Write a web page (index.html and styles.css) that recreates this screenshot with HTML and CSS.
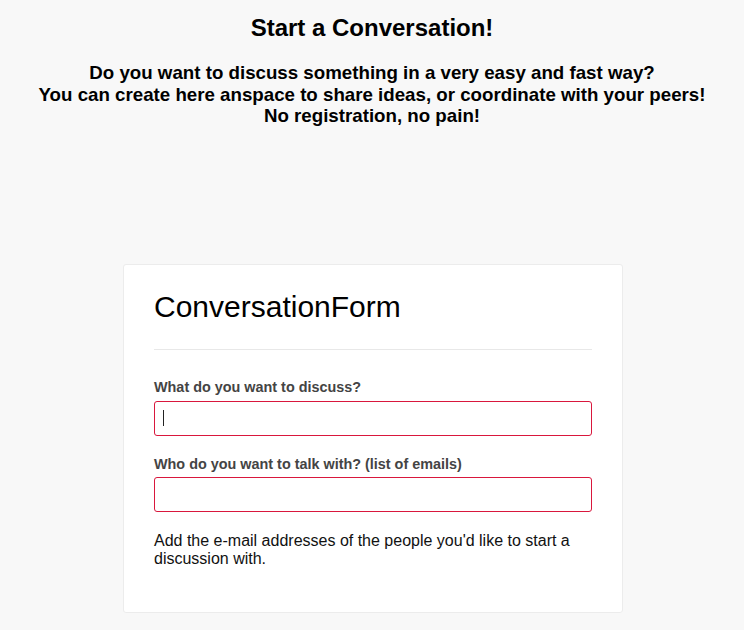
FILE: index.html
```html
<!DOCTYPE html>
<html>
<head>
<meta charset="utf-8">
<link rel="stylesheet" href="styles.css">
</head>
<body>
<header class="intro">
  <h1 class="intro-title">Start a Conversation!</h1>
  <p class="intro-text">Do you want to discuss something in a very easy and fast way?<br>You can create here anspace to share ideas, or coordinate with your peers!<br>No registration, no pain!</p>
</header>
<main class="card">
  <h2 class="card-title">ConversationForm</h2>
  <hr class="card-sep">
  <form class="form">
    <div class="field">
      <label class="field-label">What do you want to discuss?</label>
      <div class="field-input"><span class="caret"></span></div>
    </div>
    <div class="field">
      <label class="field-label">Who do you want to talk with? (list of emails)</label>
      <div class="field-input"></div>
    </div>
    <p class="help">Add the e-mail addresses of the people you'd like to start a discussion with.</p>
  </form>
</main>
</body>
</html>
```
FILE: styles.css
```css
html, body {
  margin: 0;
  padding: 0;
  background: #f8f8f8;
  font-family: "Liberation Sans", Arial, sans-serif;
  color: #000;
}
.intro {
  text-align: center;
  padding-top: 14px;
}
.intro-title {
  margin: 0;
  font-size: 24px;
  line-height: 28px;
  font-weight: bold;
}
.intro-text {
  margin: 20px 0 0;
  font-size: 18.72px;
  line-height: 21.5px;
  font-weight: bold;
}
.card {
  width: 438px;
  margin: 137px 0 0 123px;
  padding: 24px 30px 44px;
  background: #fff;
  border: 1px solid #ececec;
  border-radius: 3px;
}
.card-title {
  margin: 0;
  font-size: 30px;
  line-height: 36px;
  font-weight: normal;
}
.card-sep {
  margin: 24px 0 0;
  border: 0;
  border-top: 1px solid #e8e8e8;
}
.form {
  margin-top: 29px;
}
.field {
  margin-bottom: 20px;
}
.field-label {
  display: block;
  font-size: 14.4px;
  line-height: 17px;
  font-weight: bold;
  color: #444;
  margin-bottom: 5px;
}
.field + .field .field-label {
  margin-bottom: 4px;
}
.field-input {
  height: 33px;
  border: 1px solid #d9173d;
  border-radius: 3px;
  background: #fff;
  display: flex;
  align-items: center;
  padding-left: 8px;
}
.caret {
  width: 1px;
  height: 16px;
  background: #222;
}
.help {
  margin: 0;
  font-size: 16px;
  line-height: 18px;
  color: #111;
}
```
